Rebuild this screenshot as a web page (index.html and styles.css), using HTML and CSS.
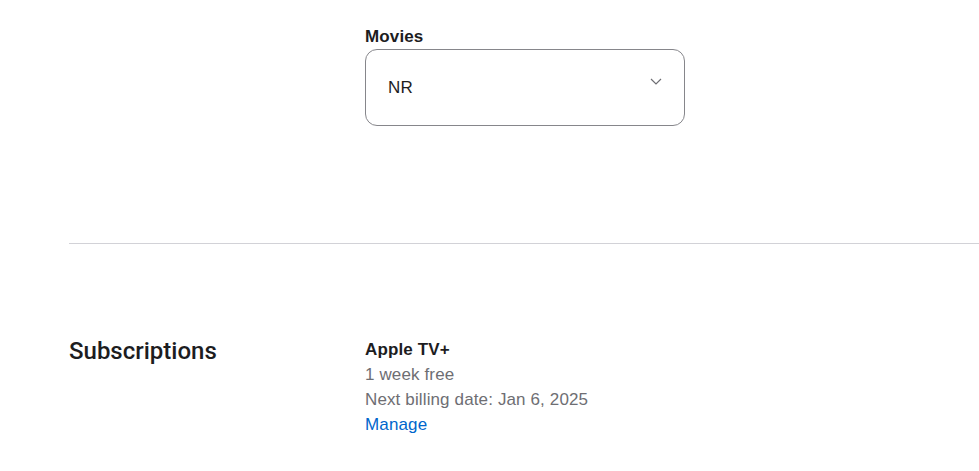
FILE: index.html
```html
<!DOCTYPE html>
<html lang="en">
<head>
    <meta charset="UTF-8">
    <meta name="viewport" content="width=device-width, initial-scale=1.0">
    <title>Account Settings</title>
    <link rel="stylesheet" href="styles.css">
</head>
<body>
<div class="page">
    <div class="row row-top">
        <div class="col-label"></div>
        <div class="col-main">
            <label class="field-label" for="movies">Movies</label>
            <div class="select" id="movies">
                <span class="select-value">NR</span>
                <svg class="chevron" width="12" height="7" viewBox="0 0 12 7">
                    <path d="M1 1 L6 6 L11 1" fill="none" stroke="#6e6e73" stroke-width="1.2"/>
                </svg>
            </div>
        </div>
    </div>

    <hr class="divider">

    <div class="row row-subs">
        <h2 class="section-title">Subscriptions</h2>
        <div class="col-main">
            <div class="sub-name">Apple TV+</div>
            <div class="sub-info">1 week free</div>
            <div class="sub-info">Next billing date: Jan 6, 2025</div>
            <a class="sub-link" href="#">Manage</a>
        </div>
    </div>
</div>
</body>
</html>
```

FILE: styles.css
```css
body { margin:0; font-family: "Liberation Sans", Arial, sans-serif; color:#1d1d1f; background:#fff; letter-spacing:0.13px; }
.page { padding-left:69px; }
.row { display:grid; grid-template-columns:296px 1fr; }
.row-top { padding-top:24px; }
.field-label { display:block; font-size:17px; font-weight:bold; line-height:25px; margin-bottom:0; }
.select { box-sizing:border-box; width:320px; height:77px; border:1px solid #86868b; border-radius:12px; padding:0 22px 0 22px; display:flex; align-items:center; justify-content:space-between; }
.select-value { font-size:17px; }
.chevron { margin-bottom:12px; }
.divider { border:none; border-top:1px solid #d2d2d7; margin:117px 0 0; }
.row-subs { padding-top:93px; }
.section-title { margin:0; font-family: Roboto, "Liberation Sans", sans-serif; font-size:24px; font-weight:500; line-height:28px; letter-spacing:0; }
.sub-name { font-size:17px; font-weight:bold; line-height:25px; }
.sub-info { font-size:17px; line-height:25px; color:#6e6e73; }
.sub-link { font-size:17px; line-height:25px; color:#0066cc; text-decoration:none; }
```
